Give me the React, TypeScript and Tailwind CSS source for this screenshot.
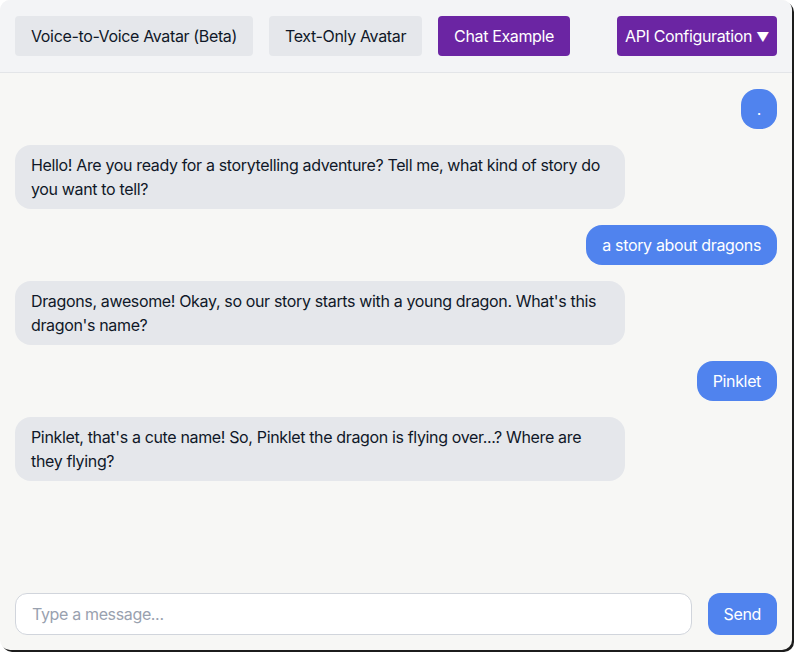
import { useState } from "react";

type Msg = { role: "user" | "bot"; text: string };

const messages: Msg[] = [
  { role: "user", text: "." },
  {
    role: "bot",
    text: "Hello! Are you ready for a storytelling adventure? Tell me, what kind of story do you want to tell?",
  },
  { role: "user", text: "a story about dragons" },
  {
    role: "bot",
    text: "Dragons, awesome! Okay, so our story starts with a young dragon. What's this dragon's name?",
  },
  { role: "user", text: "Pinklet" },
  {
    role: "bot",
    text: "Pinklet, that's a cute name! So, Pinklet the dragon is flying over...? Where are they flying?",
  },
];

export default function App() {
  const [draft, setDraft] = useState("");

  return (
    <div className="w-[794px] h-[652px] bg-white font-['Inter',sans-serif] tracking-[-0.022em]">
      <div className="flex flex-col w-[792px] h-[650px] rounded-[10px] overflow-hidden bg-[#f7f7f5] shadow-[2px_2px_0_#1c1c1c]">
        {/* Top tabs */}
        <div className="flex items-center justify-between h-[73px] px-[15px] bg-[#f3f4f6] border-b border-[#e3e5e8]">
          <div className="flex gap-4">
            <button className="h-10 px-4 rounded bg-[#e5e7eb] text-[16px] text-gray-900">
              Voice-to-Voice Avatar (Beta)
            </button>
            <button className="h-10 px-4 rounded bg-[#e5e7eb] text-[16px] text-gray-900">
              Text-Only Avatar
            </button>
            <button className="h-10 px-4 rounded bg-[#6b25a3] text-[16px] text-white">
              Chat Example
            </button>
          </div>
          <button className="h-10 px-2 rounded bg-[#6b25a3] text-[16px] text-white">
            API Configuration <span className="text-[13px]">▼</span>
          </button>
        </div>

        {/* Messages */}
        <div className="flex-1 overflow-hidden px-[15px] pt-4 flex flex-col gap-4">
          {messages.map((m, i) => (
            <div key={i} className={m.role === "user" ? "flex justify-end" : "flex justify-start"}>
              <div
                className={
                  m.role === "user"
                    ? "max-w-[80%] px-4 py-2 rounded-2xl bg-[#5083ee] text-white text-[16px] leading-6"
                    : "max-w-[80%] px-4 py-2 rounded-2xl bg-[#e5e7eb] text-gray-900 text-[16px] leading-6"
                }
              >
                {m.text}
              </div>
            </div>
          ))}
        </div>

        {/* Composer */}
        <div className="flex gap-4 px-[15px] pb-[15px] pt-3">
          <input
            value={draft}
            onChange={(e) => setDraft(e.target.value)}
            placeholder="Type a message..."
            className="flex-1 h-[42px] px-4 rounded-xl border border-gray-300 bg-white text-[16px] placeholder:text-gray-400 outline-none"
          />
          <button className="h-[42px] px-4 rounded-xl bg-[#5083ee] text-white text-[16px]">
            Send
          </button>
        </div>
      </div>
    </div>
  );
}
